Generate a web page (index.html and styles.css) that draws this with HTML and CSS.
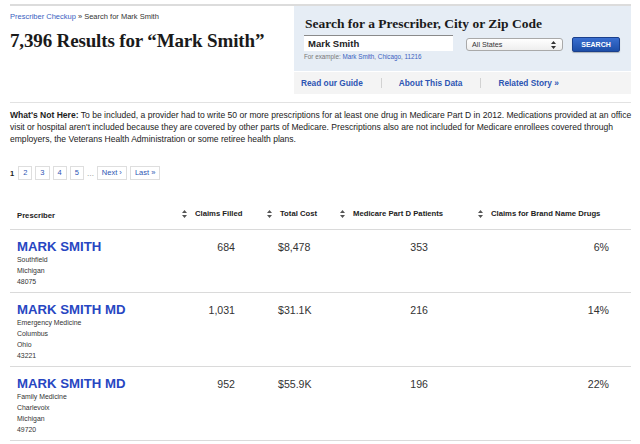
FILE: index.html
```html
<!DOCTYPE html>
<html lang="en">
<head>
<meta charset="utf-8">
<title>Prescriber Checkup – Search for Mark Smith</title>
<link rel="stylesheet" href="styles.css">
</head>
<body>
<div class="page">
  <header class="top">
    <div class="intro">
      <div class="crumbs"><a href="#">Prescriber Checkup</a> » Search for Mark Smith</div>
      <h1>7,396 Results for “Mark Smith”</h1>
    </div>
    <div class="search">
      <div class="search-box">
        <h2>Search for a Prescriber, City or Zip Code</h2>
        <div class="search-row">
          <div class="field">
            <div class="input">Mark Smith</div>
            <div class="example">For example: <a href="#">Mark Smith</a>, <a href="#">Chicago</a>, <a href="#">11216</a></div>
          </div>
          <div class="select">All States<svg class="updown" width="5" height="8" viewBox="0 0 5 8"><path d="M2.5 0 L5 3 H0 Z M2.5 8 L5 5 H0 Z" fill="#333"/></svg></div>
          <div class="button">SEARCH</div>
        </div>
      </div>
      <nav class="links">
        <a href="#">Read our Guide</a>
        <span class="sep"></span>
        <a href="#">About This Data</a>
        <span class="sep"></span>
        <a href="#">Related Story »</a>
      </nav>
    </div>
  </header>

  <p class="note"><b>What's Not Here:</b> To be included, a provider had to write 50 or more prescriptions for at least one drug in Medicare Part D in 2012. Medications provided at an office visit or hospital aren't included because they are covered by other parts of Medicare. Prescriptions also are not included for Medicare enrollees covered through employers, the Veterans Health Administration or some retiree health plans.</p>

  <div class="pager">
    <span class="current">1</span>
    <a class="pg" href="#">2</a>
    <a class="pg" href="#">3</a>
    <a class="pg" href="#">4</a>
    <a class="pg" href="#">5</a>
    <span class="dots">…</span>
    <a class="pg" href="#">Next ›</a>
    <a class="pg" href="#">Last »</a>
  </div>

  <table class="results">
    <colgroup>
      <col class="c1"><col class="c2"><col class="c3"><col class="c4"><col class="c5">
    </colgroup>
    <thead>
      <tr>
        <th class="name-h">Prescriber</th>
        <th><span class="sort"><svg width="5" height="8" viewBox="0 0 5 8"><path d="M2.5 0 L5 3 H0 Z M2.5 8 L5 5 H0 Z" fill="#555"/></svg>Claims Filled</span></th>
        <th><span class="sort"><svg width="5" height="8" viewBox="0 0 5 8"><path d="M2.5 0 L5 3 H0 Z M2.5 8 L5 5 H0 Z" fill="#555"/></svg>Total Cost</span></th>
        <th><span class="sort"><svg width="5" height="8" viewBox="0 0 5 8"><path d="M2.5 0 L5 3 H0 Z M2.5 8 L5 5 H0 Z" fill="#555"/></svg>Medicare Part D Patients</span></th>
        <th><span class="sort"><svg width="5" height="8" viewBox="0 0 5 8"><path d="M2.5 0 L5 3 H0 Z M2.5 8 L5 5 H0 Z" fill="#555"/></svg>Claims for Brand Name Drugs</span></th>
      </tr>
    </thead>
    <tbody>
      <tr>
        <td class="who"><a class="doc" href="#">MARK SMITH</a><div class="sub">Southfield</div><div class="sub">Michigan</div><div class="sub">48075</div></td>
        <td class="claims">684</td>
        <td class="cost">$8,478</td>
        <td class="patients">353</td>
        <td class="brand">6%</td>
      </tr>
      <tr>
        <td class="who"><a class="doc" href="#">MARK SMITH MD</a><div class="sub">Emergency Medicine</div><div class="sub">Columbus</div><div class="sub">Ohio</div><div class="sub">43221</div></td>
        <td class="claims">1,031</td>
        <td class="cost">$31.1K</td>
        <td class="patients">216</td>
        <td class="brand">14%</td>
      </tr>
      <tr>
        <td class="who"><a class="doc" href="#">MARK SMITH MD</a><div class="sub">Family Medicine</div><div class="sub">Charlevoix</div><div class="sub">Michigan</div><div class="sub">49720</div></td>
        <td class="claims">952</td>
        <td class="cost">$55.9K</td>
        <td class="patients">196</td>
        <td class="brand">22%</td>
      </tr>
    </tbody>
  </table>
</div>
</body>
</html>
```

FILE: styles.css
```css
* { box-sizing: border-box; }
body {
  margin: 0;
  background: #fff;
  color: #222;
  font-family: "Liberation Sans", Arial, sans-serif;
}
a { color: #2d55b3; text-decoration: none; }

.page {
  width: 640px;
  padding: 4px 9px 0 10px;
}

/* header */
.top {
  display: flex;
  justify-content: space-between;
  border-top: 2px solid #dcdcdc;
  padding-bottom: 8px;
  border-bottom: 1px solid #e2e2e2;
}
.intro { padding-top: 6px; }
.crumbs {
  font-size: 7.5px;
  line-height: 10px;
  color: #333;
}
.crumbs a { color: #3a5fbf; }
h1 {
  margin: 8px 0 0;
  font-family: "Liberation Serif", "Times New Roman", serif;
  font-weight: bold;
  font-size: 19px;
  line-height: 22px;
  color: #1a1a1a;
  letter-spacing: -0.15px;
}

.search { width: 337px; }
.search-box {
  background: #e6edf5;
  padding: 7px 11px 9px 10px;
}
h2 {
  margin: 2px 0 0 1px;
  font-family: "Liberation Serif", "Times New Roman", serif;
  font-weight: bold;
  font-size: 13.5px;
  line-height: 18px;
  color: #1a1a1a;
}
.search-row {
  display: flex;
  align-items: flex-start;
  margin-top: 2px;
}
.field { width: 149px; }
.input {
  height: 16px;
  background: #fff;
  border-top: 1px solid #8a8a8a;
  padding: 1px 4px 0;
  font-size: 9.5px;
  font-weight: bold;
  line-height: 14px;
  color: #222;
}
.example {
  margin-top: 1px;
  font-size: 6.3px;
  line-height: 10px;
  color: #777;
}
.example a { color: #3a5fbf; }
.select {
  margin: 3px 0 0 13px;
  width: 97px;
  height: 13px;
  background: linear-gradient(#ffffff, #eeeeee);
  border: 1px solid #a9a9a9;
  border-radius: 3px;
  display: flex;
  align-items: center;
  justify-content: space-between;
  padding: 0 6px 0 5px;
  font-size: 7.2px;
  color: #333;
}
.updown { display: block; }
.button {
  margin: 2px 0 0 9px;
  width: 48px;
  height: 15px;
  border-radius: 2px;
  background: linear-gradient(#3a6fd0, #1d4ea8);
  border: 1px solid #1a3f8c;
  box-shadow: 0 1px 1px rgba(0,0,0,0.25);
  color: #fff;
  font-size: 7px;
  font-weight: bold;
  line-height: 13px;
  text-align: center;
}

.links {
  margin-top: 1px;
  height: 22px;
  background: #f4f4f4;
  display: flex;
  align-items: center;
  padding-left: 7px;
  font-size: 8.3px;
  font-weight: bold;
}
.links a { color: #2d55b3; }
.sep {
  width: 1px;
  height: 10px;
  background: #d2d2d2;
  margin: 0 17px 0 18px;
}

/* note */
.note {
  margin: 6px -6px 0 0;
  font-size: 8.55px;
  line-height: 12px;
  color: #222;
}

/* pager */
.pager {
  margin-top: 21px;
  display: flex;
  align-items: center;
  gap: 3px;
  font-size: 7.5px;
}
.current { font-weight: bold; margin-right: 1px; }
.pg {
  display: block;
  height: 14px;
  line-height: 12px;
  padding: 0 4px;
  border: 1px solid #dedede;
  color: #2d55b3;
}
.dots { color: #777; margin: 0; letter-spacing: -0.5px; }

/* table */
.results {
  width: 621px;
  margin-top: 26px;
  border-collapse: collapse;
  table-layout: fixed;
}
.c1 { width: 168px; }
.c2 { width: 85px; }
.c3 { width: 73px; }
.c4 { width: 138px; }
.c5 { width: 157px; }
th {
  text-align: left;
  font-size: 7.7px;
  font-weight: bold;
  color: #222;
  padding: 0 0 9px 4px;
  border-bottom: 1px solid #dadada;
  height: 23px;
  vertical-align: bottom;
}
th.name-h { padding-left: 7px; }
.sort { display: inline-flex; align-items: center; gap: 8px; }
.sort svg { display: block; }

td {
  vertical-align: baseline;
  padding: 9px 0 5px;
  border-bottom: 1px solid #dadada;
  font-size: 10.6px;
  color: #333;
}
td.who { padding-left: 7px; }
.doc {
  display: block;
  font-size: 13.2px;
  font-weight: bold;
  line-height: 15px;
  color: #2746c2;
}
.sub {
  font-size: 6.9px;
  line-height: 11px;
  color: #333;
}
.claims { text-align: right; padding-right: 28px; }
.cost { text-align: left; padding-left: 15px; }
.patients { text-align: right; padding-right: 46px; }
.brand { text-align: right; padding-right: 22px; }
```
